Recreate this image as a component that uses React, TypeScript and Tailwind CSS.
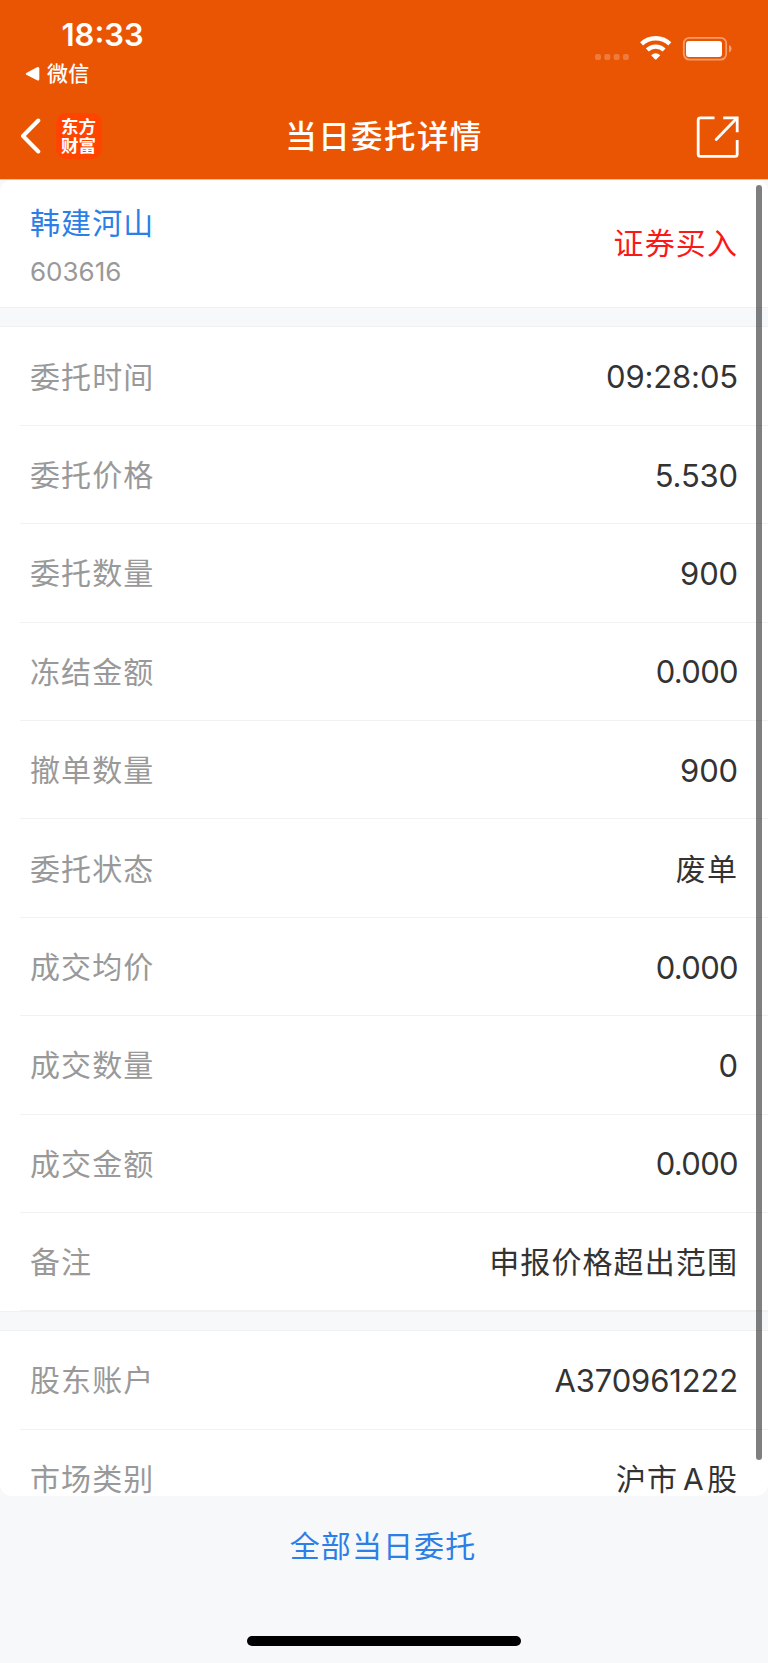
import React from "react";

type Field = { label: string; value: React.ReactNode; kind?: "number" | "zero" | "text" };

const orderFields: Field[] = [
  { label: "委托时间", value: "09:28:05", kind: "number" },
  { label: "委托价格", value: "5.530", kind: "number" },
  { label: "委托数量", value: "900", kind: "number" },
  { label: "冻结金额", value: "0.000", kind: "zero" },
  { label: "撤单数量", value: "900", kind: "number" },
  { label: "委托状态", value: "废单" },
  { label: "成交均价", value: "0.000", kind: "zero" },
  { label: "成交数量", value: "0", kind: "number" },
  { label: "成交金额", value: "0.000", kind: "zero" },
  { label: "备注", value: "申报价格超出范围" },
];

const valueStyles = {
  number: "pt-px text-[31px] tracking-[-0.15px]",
  zero: "pt-px text-[31px] tracking-[-0.65px]",
  text: "pt-px text-[30px] tracking-[1.1px]",
};

function Row({ label, value, kind = "text" }: Field) {
  return (
    <div className="ml-5 flex h-[98.4px] shrink-0 items-center justify-between border-b border-[#f1f2f3] pr-[30px] pl-[10px]">
      <span className="pt-px text-[30px] leading-none tracking-[1.1px] text-[#999999]">{label}</span>
      <span className={`leading-none text-[#333333] ${valueStyles[kind]}`}>{value}</span>
    </div>
  );
}

function StatusIcons() {
  return (
    <svg width="140" height="28" viewBox="0 0 140 28" fill="none">
      <g fill="#fff" opacity=".22">
        <rect x="3" y="19" width="6" height="6" rx="2" />
        <rect x="12.3" y="19" width="6" height="6" rx="2" />
        <rect x="21.6" y="19" width="6" height="6" rx="2" />
        <rect x="30.9" y="19" width="6" height="6" rx="2" />
      </g>
      <path d="M49.6 8.9 A20.5 20.5 0 0 1 77.8 8.9" stroke="#fff" strokeWidth="4.4" />
      <path d="M55.3 15 A12.3 12.3 0 0 1 72.1 15" stroke="#fff" strokeWidth="4.2" />
      <path d="M59.1 20.2 Q63.7 16.4 68.3 20.2 L64.7 24 Q63.7 25 62.7 24 Z" fill="#fff" />
      <rect x="91.8" y="2.8" width="42.4" height="21.8" rx="5.5" stroke="#fff" strokeOpacity=".42" strokeWidth="1.8" />
      <rect x="94" y="5.9" width="36" height="16" rx="3" fill="#fff" />
      <path d="M137 10 Q139.6 11.2 139.6 13.7 Q139.6 16.2 137 17.4 Z" fill="#fff" fillOpacity=".45" />
    </svg>
  );
}

export default function App() {
  return (
    <div className="relative flex h-[1663px] w-[768px] flex-col overflow-hidden bg-[#f7f8fa] font-[Inter,'Noto_Sans_CJK_SC',sans-serif]">
      <header className="flex h-[180px] shrink-0 flex-col border-b border-[#f8bd99] bg-[#ea5504] text-white">
        <div className="flex h-[92px] justify-between">
          <div className="pt-[20px] pl-[25px]">
            <div className="pl-[36.5px] text-[31px] leading-[30px] font-semibold">18:33</div>
            <div className="mt-[12px] flex items-center gap-[7px]">
              <svg width="15" height="16" viewBox="0 0 15 16">
                <path d="M1.3 7 L12 1.2 Q14.3.2 14.3 2.5 V13 Q14.3 15.3 12 14.3 L1.3 8.8 Q0 7.9 1.3 7 Z" fill="#fff" />
              </svg>
              <span className="text-[21px] leading-[24px] font-medium tracking-[0.3px]">微信</span>
            </div>
          </div>
          <div className="pt-[35px] pr-[36px]">
            <StatusIcons />
          </div>
        </div>
        <div className="grid h-[87px] grid-cols-3 items-center px-[20px]">
          <div className="flex items-center">
            <svg width="22" height="36" viewBox="0 0 22 36" fill="none">
              <path d="M18.3 2.5 L3 18 L18.3 33.5" stroke="#fff" strokeWidth="4" strokeLinecap="round" strokeLinejoin="round" />
            </svg>
            <div className="ml-[13.5px] flex h-[46px] w-[46px] flex-col items-center justify-center rounded-[10px] bg-[#ff4400] text-[17.5px] leading-[19px] font-bold">
              <span>东方</span>
              <span>财富</span>
            </div>
          </div>
          <h1 className="pt-[2px] text-center text-[31.5px] leading-none font-medium tracking-[1.4px] whitespace-nowrap">当日委托详情</h1>
          <svg className="mr-[8px] justify-self-end" width="44" height="44" viewBox="0 0 44 44" fill="none" stroke="#fff" strokeWidth="2.8">
            <path d="M18.5 3.8 H4.4 Q2.2 3.8 2.2 6 V40.2 Q2.2 42.4 4.4 42.4 H39 Q41.2 42.4 41.2 40.2 V26" />
            <path d="M27.2 3.8 H41.2 V18.2" />
            <path d="M40.3 4.8 L20.2 25.4" strokeLinecap="round" />
          </svg>
        </div>
      </header>

      <main className="flex h-[1316px] shrink-0 flex-col overflow-hidden rounded-xl bg-white">
        <section className="flex h-[127px] shrink-0 items-center justify-between pr-[30px] pl-[30px]">
          <div className="pt-[6px]">
            <div className="text-[30px] leading-[34px] tracking-[1.1px] text-[#2b7fe6]">韩建河山</div>
            <div className="mt-[17px] text-[26px] leading-[30px] text-[#999999]">603616</div>
          </div>
          <span className="pb-[2px] text-[30px] leading-none tracking-[1.1px] text-[#fa1919]">证券买入</span>
        </section>
        <div className="h-[20px] shrink-0 border-y border-[#f0f1f2] bg-[#f7f8fa]" />
        <section className="shrink-0 pt-[0.5px]">
          {orderFields.map((f) => (
            <Row key={f.label} {...f} />
          ))}
        </section>
        <div className="h-[19.5px] shrink-0 border-y border-[#f0f1f2] bg-[#f7f8fa]" />
        <section className="shrink-0 pt-[0.3px]">
          <Row label="股东账户" value="A370961222" kind="number" />
          <Row
            label="市场类别"
            value={
              <>
                沪市<span className="mr-[2px] ml-[5px]">A</span>股
              </>
            }
          />
        </section>
      </main>

      <footer className="flex flex-1 flex-col items-center justify-between pb-[17px]">
        <button className="mt-[33px] mr-[2px] text-[30px] leading-[34px] tracking-[1.1px] text-[#2b7fe6]">全部当日委托</button>
        <div className="h-[10px] w-[274px] rounded-full bg-black" />
      </footer>

      <div className="absolute top-[185px] right-[6px] h-[1275px] w-[6px] rounded-full bg-black/50" />
    </div>
  );
}
